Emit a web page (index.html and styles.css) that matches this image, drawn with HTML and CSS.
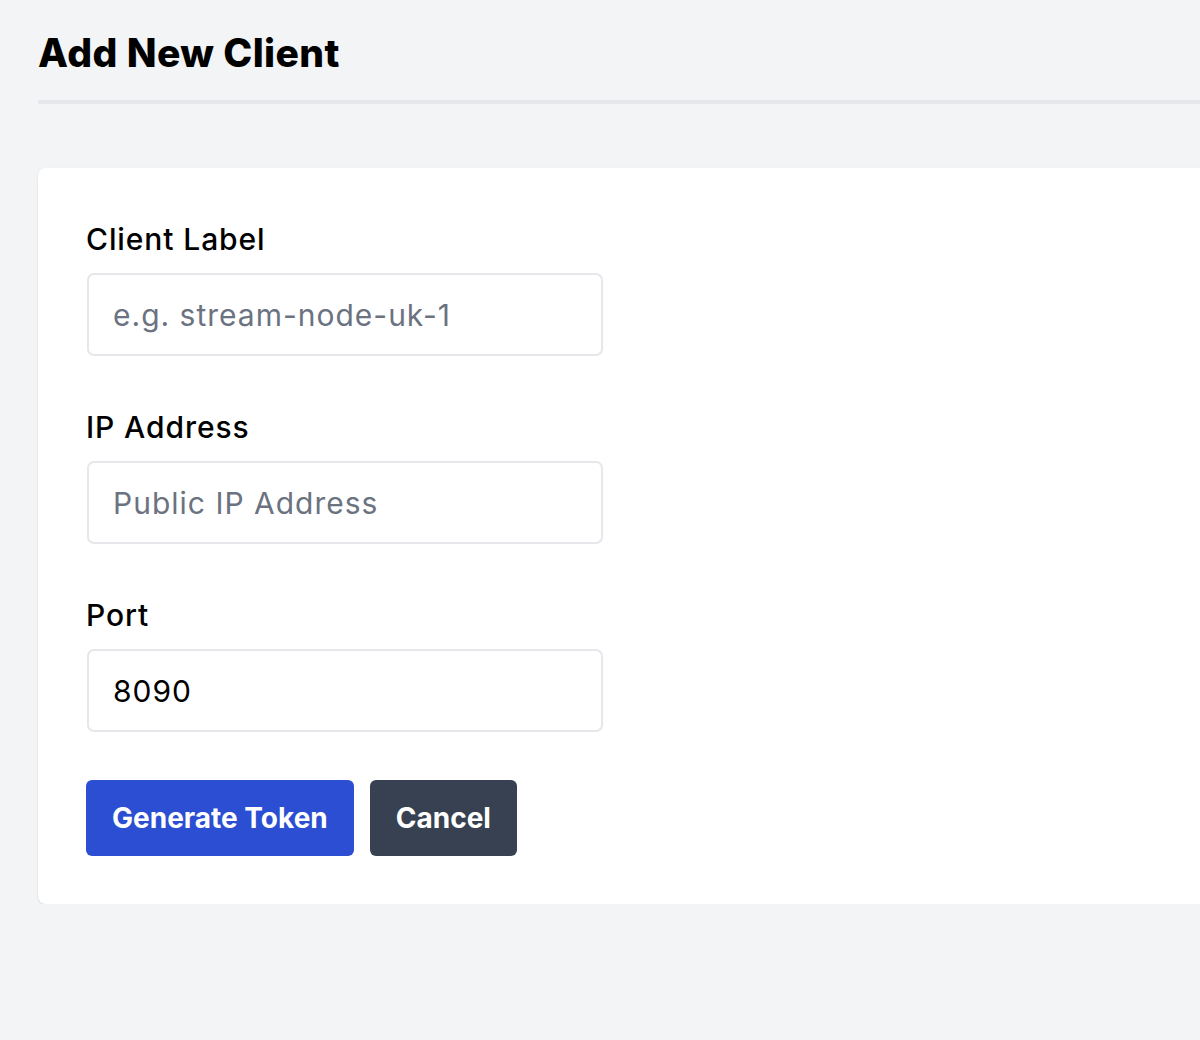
FILE: index.html
```html
<!DOCTYPE html>
<html lang="en">
<head>
<meta charset="utf-8">
<title>Add New Client</title>
<link rel="stylesheet" href="styles.css">
</head>
<body>
<main class="page">
  <header class="page-header">
    <h1 class="page-title">Add New Client</h1>
  </header>
  <section class="card">
    <form class="form">
      <div class="field">
        <label class="label" for="label">Client Label</label>
        <input class="input" id="label" type="text" placeholder="e.g. stream-node-uk-1">
      </div>
      <div class="field">
        <label class="label" for="ip">IP Address</label>
        <input class="input" id="ip" type="text" placeholder="Public IP Address">
      </div>
      <div class="field">
        <label class="label" for="port">Port</label>
        <input class="input" id="port" type="text" value="8090">
      </div>
      <div class="actions">
        <button type="button" class="btn btn-primary">Generate Token</button>
        <button type="button" class="btn btn-secondary">Cancel</button>
      </div>
    </form>
  </section>
</main>
</body>
</html>
```
FILE: styles.css
```css
html, body {
  margin: 0;
  padding: 0;
  background: #f3f4f6;
  overflow: hidden;
}
body {
  font-family: Inter, "Liberation Sans", sans-serif;
  color: #000;
}
.page {
  padding: 30px 0 0 38px;
  width: 1300px;
}
.page-header {
  padding-bottom: 24px;
  border-bottom: 4px solid #e5e7eb;
}
.page-title {
  margin: 0;
  font-size: 39px;
  line-height: 46px;
  font-weight: 800;
  letter-spacing: 0.4px;
}
.card {
  margin-top: 64px;
  background: #fff;
  border-radius: 8px;
  box-shadow: 0 1px 3px rgba(0,0,0,0.08), 0 1px 2px rgba(0,0,0,0.04);
  padding: 54px 48px 48px 48px;
}
.form {
  display: flex;
  flex-direction: column;
  align-items: flex-start;
}
.field {
  display: flex;
  flex-direction: column;
  margin-bottom: 54px;
}
.field:nth-child(3) {
  margin-bottom: 48px;
}
.label {
  font-size: 30px;
  line-height: 34px;
  font-weight: 500;
  letter-spacing: 0.9px;
  margin-bottom: 17px;
}
.input {
  box-sizing: border-box;
  width: 516px;
  height: 83px;
  margin-left: 1px;
  border: 2px solid #e5e7eb;
  border-radius: 7px;
  padding: 0 24px;
  font-family: Inter, "Liberation Sans", sans-serif;
  font-size: 30px;
  letter-spacing: 1px;
  color: #000;
  background: #fff;
  outline: none;
}
.input::placeholder {
  color: #6b7280;
}
.actions {
  display: flex;
  gap: 16px;
}
.btn {
  height: 76px;
  padding: 0 26px;
  border: none;
  border-radius: 6px;
  font-family: Inter, "Liberation Sans", sans-serif;
  font-size: 28px;
  font-weight: 700;
  color: #fff;
  cursor: pointer;
}
.btn-primary {
  background: #2b4ed2;
}
.btn-secondary {
  background: #374151;
}
```
